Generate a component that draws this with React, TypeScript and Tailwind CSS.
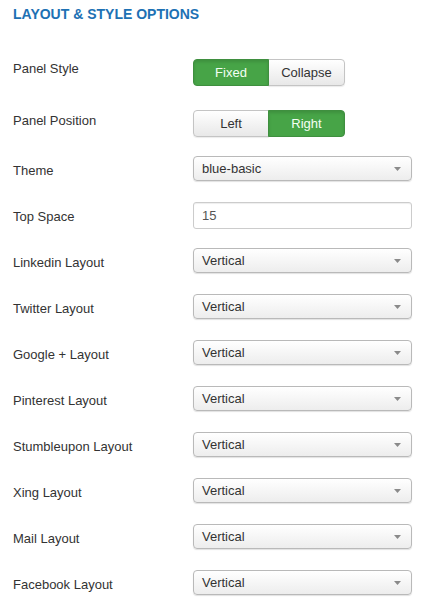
import React from 'react';

const font = { fontFamily: '"Liberation Sans", Arial, sans-serif' };

const Caret: React.FC = () => (
  <svg className="absolute right-[10px] top-1/2 -translate-y-1/2" width="7" height="4" viewBox="0 0 7 4">
    <path d="M0 0h7L3.5 4z" fill="#8a8a8a" />
  </svg>
);

const Select: React.FC<{ value: string }> = ({ value }) => (
  <div className="relative w-[219px] h-[25px] rounded-[4px] border border-[#b9b9b9] bg-gradient-to-b from-white to-[#ededed] shadow-[0_1px_1px_rgba(0,0,0,0.12)] pl-[8px] text-[13px] leading-[23px] text-[#333]">
    {value}
    <Caret />
  </div>
);

const Toggle: React.FC<{ options: [string, string]; active: 0 | 1 }> = ({ options, active }) => (
  <div className="flex h-[27px] text-[13px] leading-[25px]">
    {options.map((opt, i) => {
      const on = i === active;
      const rounded = i === 0 ? 'rounded-l-[4px]' : 'rounded-r-[4px] -ml-px';
      const width = i === 0 ? 'w-[76px]' : 'w-[77px]';
      return (
        <div
          key={opt}
          className={
            on
              ? `${width} ${rounded} text-center border border-[#3f8f3f] bg-[#47a447] text-[#f4fff4] shadow-[inset_0_2px_3px_rgba(0,0,0,0.12)] z-10`
              : `${width} ${rounded} text-center border border-[#c4c4c4] bg-gradient-to-b from-white to-[#e8e8e8] text-[#333] shadow-[0_1px_1px_rgba(0,0,0,0.08)]`
          }
        >
          {opt}
        </div>
      );
    })}
  </div>
);

const Row: React.FC<{ label: string; h: string; pt: string; children: React.ReactNode }> = ({ label, h, pt, children }) => (
  <div className={`flex items-start ${h}`}>
    <div className={`w-[180px] ${pt} text-[13px] leading-[18px] text-[#333]`}>{label}</div>
    {children}
  </div>
);

const layouts = [
  'Linkedin Layout',
  'Twitter Layout',
  'Google + Layout',
  'Pinterest Layout',
  'Stumbleupon Layout',
  'Xing Layout',
  'Mail Layout',
  'Facebook Layout',
];

export default function App() {
  return (
    <div className="w-[431px] h-[609px] bg-white pl-[13px] pt-[6px] overflow-hidden" style={font}>
      <h3 className="text-[14px] leading-[16px] font-bold text-[#1d71b4]">LAYOUT &amp; STYLE OPTIONS</h3>

      <div className="mt-[37px]">
        <Row label="Panel Style" h="h-[51px]" pt="pt-[1px]">
          <Toggle options={['Fixed', 'Collapse']} active={0} />
        </Row>
        <Row label="Panel Position" h="h-[46px]" pt="pt-[2px]">
          <Toggle options={['Left', 'Right']} active={1} />
        </Row>
        <Row label="Theme" h="h-[46px]" pt="pt-[6px]">
          <Select value="blue-basic" />
        </Row>
        <Row label="Top Space" h="h-[46px]" pt="pt-[6px]">
          <div className="w-[219px] h-[27px] rounded-[3px] border border-[#cccccc] bg-white shadow-[inset_0_1px_1px_rgba(0,0,0,0.07)] pl-[8px] text-[13px] leading-[25px] text-[#555]">
            15
          </div>
        </Row>
        {layouts.map((l) => (
          <Row key={l} label={l} h="h-[46px]" pt="pt-[6px]">
            <Select value="Vertical" />
          </Row>
        ))}
      </div>
    </div>
  );
}
